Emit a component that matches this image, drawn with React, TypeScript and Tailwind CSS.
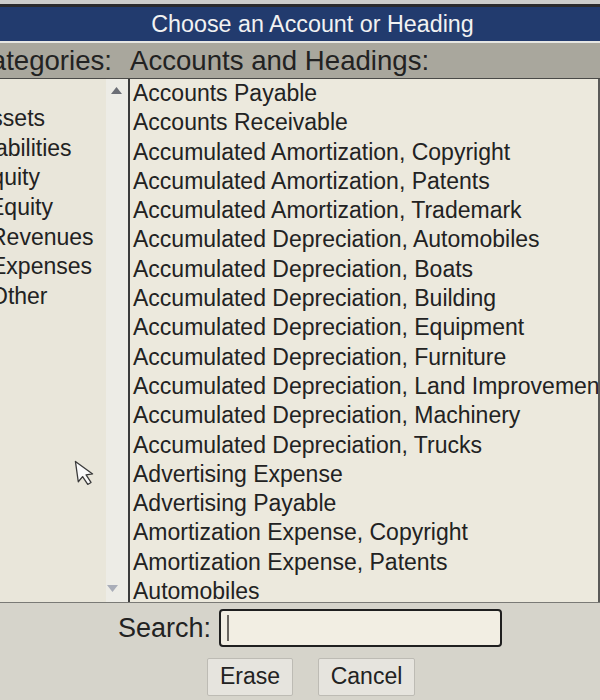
import React from "react";

const accounts = [
  "Accounts Payable",
  "Accounts Receivable",
  "Accumulated Amortization, Copyright",
  "Accumulated Amortization, Patents",
  "Accumulated Amortization, Trademark",
  "Accumulated Depreciation, Automobiles",
  "Accumulated Depreciation, Boats",
  "Accumulated Depreciation, Building",
  "Accumulated Depreciation, Equipment",
  "Accumulated Depreciation, Furniture",
  "Accumulated Depreciation, Land Improvements",
  "Accumulated Depreciation, Machinery",
  "Accumulated Depreciation, Trucks",
  "Advertising Expense",
  "Advertising Payable",
  "Amortization Expense, Copyright",
  "Amortization Expense, Patents",
  "Automobiles",
];

const categories = [
  { label: "Assets", cls: "ml-[-24px]" },
  { label: "Liabilities", cls: "ml-[-23px]" },
  { label: "Equity", cls: "ml-[-24px]" },
  { label: "Equity", cls: "ml-[-11px]" },
  { label: "Revenues", cls: "ml-[-10px]" },
  { label: "Expenses", cls: "ml-[-9px]" },
  { label: "Other", cls: "ml-[-10px]" },
];

export default function App() {
  return (
    <div
      className="relative w-[600px] h-[700px] overflow-hidden flex flex-col bg-[#d6d4cb] text-[#222]"
      style={{ fontFamily: '"Liberation Sans", Arial, sans-serif' }}
    >
      <div className="h-[4px] bg-[#cdcdcb]" />
      <div className="h-[3px] bg-[#2b2b2e]" />
      <div className="h-[34px] bg-[#223b6e] text-[#f2f2f2] text-[23.3px] flex items-center justify-center pl-[27px] pr-[2px]">
        Choose an Account or Heading
      </div>
      <div className="h-[2px] bg-[#e6e6e2]" />
      <div className="h-[35px] bg-[#a9a79d] flex items-center text-[27.6px] whitespace-nowrap">
        <div className="w-[130px] shrink-0 flex justify-end pr-[18px]">Categories:</div>
        <div>Accounts and Headings:</div>
      </div>
      <div className="h-[1px] bg-[#4a4a48]" />
      <div className="h-[523px] flex text-[23px] leading-[29.3px] whitespace-nowrap">
        <div className="w-[128px] shrink-0 flex bg-[#e9e6da]">
          <div className="flex-1 flex flex-col pt-[25px]">
            {categories.map((c, i) => (
              <div key={i} className={`h-[29.7px] ${c.cls}`}>
                {c.label}
              </div>
            ))}
          </div>
          <div className="w-[22px] bg-[#edece6] flex flex-col items-center justify-between pt-[8px] pb-[10px]">
            <svg width="11" height="7" viewBox="0 0 11 7" className="ml-[-2px]">
              <polygon points="5.5,0 11,7 0,7" fill="#6b6e75" />
            </svg>
            <svg width="11" height="7" viewBox="0 0 11 7" className="ml-[-10px]">
              <polygon points="0,0 11,0 5.5,7" fill="#a9adb8" />
            </svg>
          </div>
        </div>
        <div className="w-[2px] shrink-0 bg-[#3b3b3b]" />
        <div className="flex-1 overflow-hidden bg-[#ece9dd] pl-[3px]">
          {accounts.map((a) => (
            <div key={a}>{a}</div>
          ))}
        </div>
        <div className="w-[2px] shrink-0 bg-[#5a5a58]" />
      </div>
      <div className="h-[1px] bg-[#7a7a76]" />
      <div className="flex-1 flex flex-col">
        <div className="flex items-center pl-[118px] pt-[5px] gap-[8px]">
          <span className="text-[27px]">Search:</span>
          <div className="w-[283px] h-[38px] border-2 border-[#1f1f1f] rounded-[4px] bg-[#f2eee3] flex items-center">
            <div className="w-[2px] h-[26px] bg-[#6a6660] ml-[6px]" />
          </div>
        </div>
        <div className="flex pl-[207px] gap-[25px] mt-[9px] text-[23px]">
          <div className="w-[86px] h-[38px] border border-[#bdbbb4] rounded-[2px] bg-[#e6e4de] flex items-center justify-center">
            Erase
          </div>
          <div className="w-[97px] h-[38px] border border-[#bdbbb4] rounded-[2px] bg-[#e6e4de] flex items-center justify-center">
            Cancel
          </div>
        </div>
      </div>
      <svg
        className="absolute left-[72px] top-[459px]"
        width="26"
        height="32"
        viewBox="0 0 26 32"
      >
        <g transform="rotate(-8 3 3)">
          <path
            d="M3.5 2.5 L3.5 23 L8.5 18.5 L12.5 27 L16 25.5 L12.2 17.3 L18.8 17.3 Z"
            fill="#fafafa"
            stroke="#3a3a3a"
            strokeWidth="1.3"
            strokeLinejoin="round"
          />
        </g>
      </svg>
    </div>
  );
}
